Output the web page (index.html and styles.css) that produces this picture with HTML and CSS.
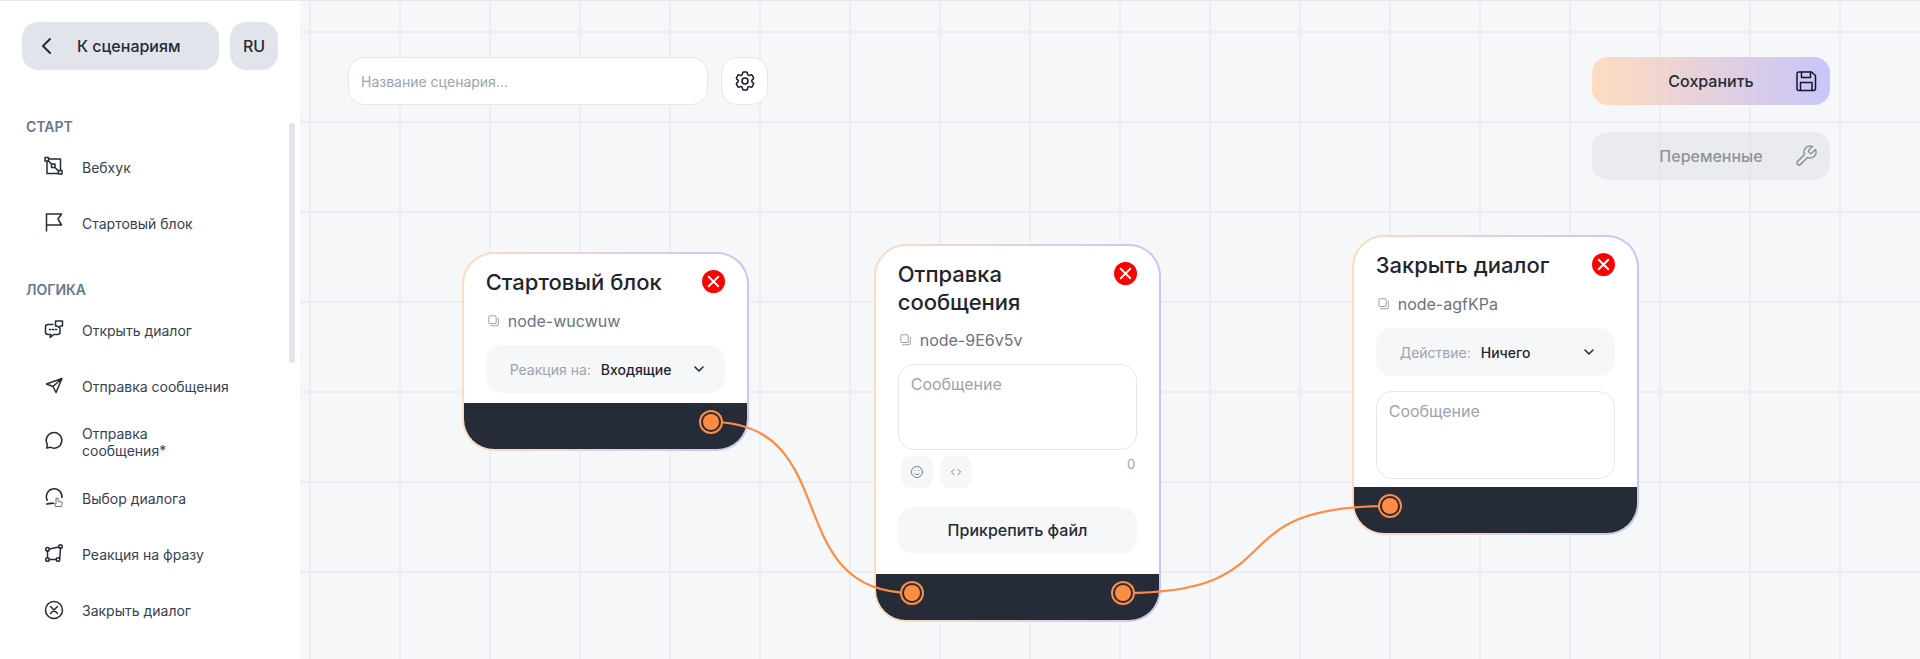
FILE: index.html
```html
<!DOCTYPE html>
<html lang="en">
<head>
  <meta charset="UTF-8" />
  <title>Сценарий</title>
  <link rel="stylesheet" href="styles.css">
</head>
<body>
  <div class="page">
    <aside class="sidebar">
      <div class="side-head">
        <button class="back-btn">
          <svg class="back-icon" viewBox="0 0 24 24"><path d="M15 5l-7 7 7 7"/></svg>
          <span>К сценариям</span>
        </button>
        <button class="lang-btn">RU</button>
      </div>

      <div class="side-title">СТАРТ</div>
      <div class="side-item">
        <svg class="side-icon" viewBox="0 0 24 24"><path d="M7 4H18.500V15M5 6.500V18.500H16M6.500 6L9.500 9M13 12.500L16 15.500"/><rect x="3" y="2.500" width="3.500" height="3.500"/><rect x="9.500" y="9" width="3.500" height="3.500"/><rect x="16.500" y="15.500" width="3.500" height="3.500"/></svg>
        <span class="side-label">Вебхук</span>
      </div>
      <div class="side-item">
        <svg class="side-icon" viewBox="0 0 24 24"><path d="M4.500 20V3H19.500L16 8L19.500 14H4.500"/></svg>
        <span class="side-label">Стартовый блок</span>
      </div>

      <div class="side-title side-title-next">ЛОГИКА</div>
      <div class="side-item">
        <svg class="side-icon" viewBox="0 0 24 24"><path d="M11 6.500H6A2.500 2.500 0 0 0 3.500 9V14A2.500 2.500 0 0 0 6 16.500H9L8 19.500L12 16.500H15.500A2.500 2.500 0 0 0 18 14V10M13.500 3H20.500V8H18.500L17 9.500L15.500 8H13.500Z"/><path class="dots" d="M7.500 11.500H8.500M10.500 11.500H11.500M13.500 11.500H14.500"/></svg>
        <span class="side-label">Открыть диалог</span>
      </div>
      <div class="side-item">
        <svg class="side-icon" viewBox="0 0 24 24"><path d="M20 4.500L4.500 10L11 12.500L14 18.500ZM11 12.500L20 4.500"/></svg>
        <span class="side-label">Отправка сообщения</span>
      </div>
      <div class="side-item">
        <svg class="side-icon" viewBox="0 0 24 24"><path d="M5.300 14.300A7.800 7.800 0 1 1 8.300 17.200L4.800 18Z"/></svg>
        <span class="side-label">Отправка сообщения*</span>
      </div>
      <div class="side-item">
        <svg class="side-icon" viewBox="0 0 24 24"><path d="M5.300 14.300A7.800 7.800 0 1 1 19.900 11.500M11.500 17.200H8.300L4.800 18Z"/><path class="hand" d="M14 12.500V18L12.500 17.500L13.500 20.500H19.500L20.500 16.500L16 15V12.500Z"/></svg>
        <span class="side-label">Выбор диалога</span>
      </div>
      <div class="side-item">
        <svg class="side-icon" viewBox="0 0 24 24"><path d="M7.300 7L16.700 4.900M5.500 9V15.700M7.300 17.500H14.200M17.800 16L18.500 6.300"/><circle cx="5.500" cy="7.300" r="1.800"/><circle cx="18.500" cy="4.500" r="1.800"/><circle cx="5.500" cy="17.500" r="1.800"/><circle cx="16" cy="17.500" r="1.800"/></svg>
        <span class="side-label">Реакция на фразу</span>
      </div>
      <div class="side-item">
        <svg class="side-icon" viewBox="0 0 24 24"><circle cx="12" cy="12" r="8.500"/><path d="M8.500 8.500L15.500 15.500M15.500 8.500L8.500 15.500"/></svg>
        <span class="side-label">Закрыть диалог</span>
      </div>
      <div class="side-scroll"></div>
    </aside>

    <main class="canvas">
      <div class="toolbar">
        <div class="toolbar-left">
          <div class="name-input">Название сценария...</div>
          <button class="gear-btn">
            <svg class="gear-icon" viewBox="0 0 24 24"><path d="M9.594 3.94c.09-.542.56-.94 1.11-.94h2.593c.55 0 1.02.398 1.11.94l.213 1.281c.063.374.313.686.645.87.074.04.147.083.22.127.325.196.72.257 1.075.124l1.217-.456a1.125 1.125 0 0 1 1.37.49l1.296 2.247a1.125 1.125 0 0 1-.26 1.431l-1.003.827c-.293.241-.438.613-.43.992a7.723 7.723 0 0 1 0 .255c-.008.378.137.75.43.991l1.004.827c.424.35.534.955.26 1.43l-1.298 2.247a1.125 1.125 0 0 1-1.369.491l-1.217-.456c-.355-.133-.75-.072-1.076.124a6.47 6.47 0 0 1-.22.128c-.331.183-.581.495-.644.869l-.213 1.281c-.09.543-.56.94-1.11.94h-2.594c-.55 0-1.019-.398-1.11-.94l-.213-1.281c-.062-.374-.312-.686-.644-.87a6.52 6.52 0 0 1-.22-.127c-.325-.196-.72-.257-1.076-.124l-1.217.456a1.125 1.125 0 0 1-1.369-.49l-1.297-2.247a1.125 1.125 0 0 1 .26-1.431l1.004-.827c.292-.24.437-.613.43-.991a6.932 6.932 0 0 1 0-.255c.007-.38-.138-.751-.43-.992l-1.004-.827a1.125 1.125 0 0 1-.26-1.43l1.297-2.247a1.125 1.125 0 0 1 1.37-.491l1.216.456c.356.133.751.072 1.076-.124.072-.044.146-.086.22-.128.332-.183.582-.495.644-.869l.214-1.28Z"/><circle cx="12" cy="12" r="3"/></svg>
          </button>
        </div>
        <div class="toolbar-right">
          <button class="action-btn save-btn">
            <span class="action-text">Сохранить</span>
            <svg class="action-icon" viewBox="0 0 24 24"><path d="M5 3H17.500L21.500 6.500V19.500A2 2 0 0 1 19.500 21.500H5A2 2 0 0 1 3 19.500V5A2 2 0 0 1 5 3Z"/><path d="M7.500 3V8.500H16.500V3M6.500 21.500V13.500H18V21.500"/></svg>
          </button>
          <button class="action-btn vars-btn">
            <span class="action-text">Переменные</span>
            <svg class="action-icon" viewBox="0 0 24 24"><path d="M14.700 6.300a1 1 0 0 0 0 1.400l1.600 1.600a1 1 0 0 0 1.400 0l3.770-3.770a6 6 0 0 1-7.940 7.940l-6.910 6.910a2.120 2.120 0 0 1-3-3l6.910-6.910a6 6 0 0 1 7.940-7.940l-3.760 3.760z"/></svg>
          </button>
        </div>
      </div>

      <div class="node node-start">
        <div class="node-body">
          <div class="node-head">
            <div class="node-title">Стартовый блок</div>
            <span class="node-close"><svg viewBox="0 0 24 24"><path d="M7 7L17 17M17 7L7 17"/></svg></span>
          </div>
          <div class="node-id">
            <svg class="copy-icon" viewBox="0 0 14 14"><rect x="1" y="1" width="8.500" height="9" rx="1.500"/><path d="M12 3.500V10.500A2 2 0 0 1 10 12.500H3"/></svg>
            <span>node-wucwuw</span>
          </div>
          <div class="node-select">
            <span class="select-label">Реакция на:</span>
            <span class="select-value">Входящие</span>
            <svg class="select-arrow" viewBox="0 0 24 24"><path d="M6 9l6 6 6-6"/></svg>
          </div>
        </div>
        <div class="node-foot foot-end"><span class="handle"></span></div>
      </div>

      <div class="node node-send">
        <div class="node-body">
          <div class="node-head">
            <div class="node-title">Отправка<br>сообщения</div>
            <span class="node-close"><svg viewBox="0 0 24 24"><path d="M7 7L17 17M17 7L7 17"/></svg></span>
          </div>
          <div class="node-id">
            <svg class="copy-icon" viewBox="0 0 14 14"><rect x="1" y="1" width="8.500" height="9" rx="1.500"/><path d="M12 3.500V10.500A2 2 0 0 1 10 12.500H3"/></svg>
            <span>node-9E6v5v</span>
          </div>
          <div class="node-area">Сообщение</div>
          <div class="area-tools">
            <span class="tool-btn">
              <svg viewBox="0 0 24 24"><circle cx="12" cy="12" r="9.500"/><path d="M8 14.500s1.500 2 4 2 4-2 4-2M9 9.500h.01M15 9.500h.01"/></svg>
            </span>
            <span class="tool-btn">
              <svg viewBox="0 0 24 24"><path d="M8.500 7.500L4 12l4.500 4.500M15.500 7.500L20 12l-4.500 4.500"/></svg>
            </span>
            <span class="area-count">0</span>
          </div>
          <button class="attach-btn">Прикрепить файл</button>
        </div>
        <div class="node-foot foot-between"><span class="handle"></span><span class="handle"></span></div>
      </div>

      <div class="node node-close-dialog">
        <div class="node-body">
          <div class="node-head">
            <div class="node-title">Закрыть диалог</div>
            <span class="node-close"><svg viewBox="0 0 24 24"><path d="M7 7L17 17M17 7L7 17"/></svg></span>
          </div>
          <div class="node-id">
            <svg class="copy-icon" viewBox="0 0 14 14"><rect x="1" y="1" width="8.500" height="9" rx="1.500"/><path d="M12 3.500V10.500A2 2 0 0 1 10 12.500H3"/></svg>
            <span>node-agfKPa</span>
          </div>
          <div class="node-select">
            <span class="select-label">Действие:</span>
            <span class="select-value">Ничего</span>
            <svg class="select-arrow" viewBox="0 0 24 24"><path d="M6 9l6 6 6-6"/></svg>
          </div>
          <div class="node-area node-area-low">Сообщение</div>
        </div>
        <div class="node-foot"><span class="handle"></span></div>
      </div>

      <svg class="edges" viewBox="0 0 1620 658">
        <path d="M411 421C545 421 478 592 612 592"/>
        <path d="M823 592C1000 592 912 505 1089 505"/>
      </svg>
    </main>
  </div>
</body>
</html>
```

FILE: styles.css
```css
* {
  margin: 0;
  padding: 0;
  box-sizing: border-box;
}

html, body {
  height: 100%;
  overflow: hidden;
}

body {
  font-family: 'Inter', sans-serif;
  color: #252b37;
  background: white;
}

button {
  font-family: inherit;
  border: none;
  cursor: pointer;
  color: inherit;
}

svg {
  display: block;
  fill: none;
  stroke: currentColor;
  stroke-width: 1.5;
  stroke-linecap: round;
  stroke-linejoin: round;
}

.page {
  display: flex;
  height: 100vh;
  border-top: 1px solid #e5e7eb;
}

/* Sidebar */
.sidebar {
  position: relative;
  width: 300px;
  flex-shrink: 0;
  padding: 21px 22px 0;
  background: white;
  overflow: hidden;
}

.side-head {
  display: flex;
  gap: 11px;
  margin-bottom: 47px;
}

.back-btn {
  width: 197px;
  height: 48px;
  display: flex;
  align-items: center;
  gap: 18px;
  padding-left: 13px;
  font-size: 16px;
  font-weight: 500;
  background: #e1e4eb;
  border-radius: 16px;
}

.back-icon {
  width: 24px;
  height: 24px;
  stroke-width: 2;
}

.lang-btn {
  width: 48px;
  height: 48px;
  font-size: 16px;
  font-weight: 500;
  background: #e1e4eb;
  border-radius: 16px;
}

.side-title {
  padding-left: 4px;
  margin-bottom: 2px;
  font-size: 14px;
  line-height: 20px;
  font-weight: 600;
  color: #667793;
}

.side-title-next {
  margin-top: 29px;
}

.side-item {
  display: flex;
  align-items: center;
  gap: 16px;
  height: 56px;
  padding-left: 20px;
}

.side-icon {
  width: 24px;
  height: 24px;
  flex-shrink: 0;
}

.side-icon .dots {
  stroke-width: 1.7;
}

.side-icon .hand {
  stroke: #6b7280;
  stroke-width: 1;
  fill: white;
}

.side-label {
  width: 150px;
  font-size: 14px;
  line-height: 17px;
  color: #374151;
}

.side-scroll {
  position: absolute;
  top: 122px;
  right: 5px;
  width: 6px;
  height: 240px;
  background: #e1e4eb;
  border-radius: 3px;
}

/* Canvas */
.canvas {
  position: relative;
  flex: 1;
  overflow: hidden;
  background-color: #f6f7f9;
  background-image:
    linear-gradient(#eceef4 2px, transparent 2px),
    linear-gradient(90deg, #eceef4 2px, transparent 2px);
  background-size: 90px 90px;
  background-position: 9px 30px;
}

.toolbar {
  position: absolute;
  top: 56px;
  left: 48px;
  right: 90px;
  display: flex;
  justify-content: space-between;
  align-items: flex-start;
}

.toolbar-left {
  display: flex;
  gap: 13px;
}

.name-input {
  width: 360px;
  height: 48px;
  display: flex;
  align-items: center;
  padding-left: 12px;
  font-size: 14px;
  color: #9ca3af;
  background: white;
  border: 1px solid #e5e7eb;
  border-radius: 16px;
}

.gear-btn {
  width: 47px;
  height: 48px;
  display: flex;
  align-items: center;
  justify-content: center;
  background: white;
  border: 1px solid #e5e7eb;
  border-radius: 16px;
}

.gear-icon {
  width: 24px;
  height: 24px;
  color: #111827;
}

.toolbar-right {
  display: flex;
  flex-direction: column;
  gap: 27px;
  width: 238px;
}

.action-btn {
  height: 48px;
  display: grid;
  grid-template-columns: 1fr auto 1fr;
  align-items: center;
  padding-right: 12px;
  padding-left: 12px;
  font-size: 16px;
  font-weight: 500;
  border-radius: 16px;
}

.action-text {
  grid-column: 2;
}

.action-icon {
  grid-column: 3;
  justify-self: end;
  width: 24px;
  height: 24px;
}

.save-btn {
  background: linear-gradient(90deg, #fedcbf, #c9c5fb);
}

.save-btn .action-icon {
  color: #111827;
}

.vars-btn {
  color: #8f939b;
  background: rgba(225, 226, 231, 0.6);
}

/* Nodes */
.node {
  position: absolute;
  display: flex;
  flex-direction: column;
  width: 287.6px;
  border: 2px solid transparent;
  border-radius: 32px;
  background:
    linear-gradient(white, white) padding-box,
    linear-gradient(90deg, #fedcbf, #c9c5fb) border-box;
  overflow: hidden;
}

.node-start {
  left: 161.7px;
  top: 251px;
}

.node-send {
  left: 573.7px;
  top: 243px;
}

.node-close-dialog {
  left: 1051.7px;
  top: 234px;
}

.node-body {
  padding: 14px 22px 0;
}

.node-head {
  display: flex;
  justify-content: space-between;
  align-items: flex-start;
}

.node-title {
  font-size: 22px;
  line-height: 28px;
  font-weight: 500;
  color: #1f2530;
}

.node-close {
  width: 23px;
  height: 23px;
  margin-top: 2px;
  color: white;
  background: #ff0000;
  border-radius: 50%;
}

.node-close svg {
  width: 23px;
  height: 23px;
  stroke-width: 2;
}

.node-id {
  display: flex;
  align-items: center;
  gap: 8px;
  height: 20px;
  margin-top: 15px;
  padding-left: 2px;
  font-size: 16px;
  color: #6b7280;
}

.node-send .node-id {
  margin-top: 14px;
}

.copy-icon {
  width: 12px;
  height: 12px;
  color: #9ca3af;
  stroke-width: 1.2;
}

.node-select {
  display: flex;
  align-items: center;
  gap: 10px;
  height: 48px;
  margin-top: 14px;
  padding-left: 24px;
  font-size: 14px;
  background: #f6f7f9;
  border-radius: 16px;
}

.select-label {
  color: #9ca3af;
}

.select-value {
  flex: 1;
  font-weight: 500;
  color: #1f2530;
}

.select-arrow {
  width: 16px;
  height: 16px;
  margin-right: 18px;
  stroke-width: 2.4;
}

.node-area {
  height: 86px;
  margin-top: 14px;
  padding: 9px 12px;
  font-size: 16px;
  line-height: 20px;
  color: #9ca3af;
  background: white;
  border: 1px solid #e5e7eb;
  border-radius: 16px;
}

.node-area-low {
  height: 88px;
  margin-top: 15px;
  margin-bottom: 8px;
}

.area-tools {
  display: flex;
  gap: 7px;
  margin-top: 6px;
  padding-left: 3px;
}

.tool-btn {
  width: 32px;
  height: 32px;
  display: flex;
  align-items: center;
  justify-content: center;
  color: #6b7280;
  background: #f6f7f9;
  border-radius: 10px;
}

.tool-btn svg {
  width: 14px;
  height: 14px;
}

.area-count {
  margin-left: auto;
  margin-right: 2px;
  font-size: 13px;
  line-height: 16px;
  color: #9ca3af;
}

.attach-btn {
  display: block;
  width: 100%;
  height: 47px;
  margin-top: 19px;
  margin-bottom: 20px;
  padding-bottom: 2px;
  font-size: 16px;
  font-weight: 500;
  background: #f6f7f9;
  border-radius: 16px;
}

.node-start .node-select {
  margin-bottom: 10px;
}

.node-foot {
  display: flex;
  height: 46px;
  padding: 11px 28px 0;
  background: #252b37;
}

.foot-end {
  justify-content: flex-end;
}

.foot-between {
  justify-content: space-between;
}

.handle {
  position: relative;
  z-index: 2;
  width: 16px;
  height: 16px;
  background: #ff8c42;
  border-radius: 50%;
  box-shadow: 0 0 0 2px #252b37, 0 0 0 4px #ff8c42;
}

.edges {
  position: absolute;
  left: 0;
  top: 0;
  width: 1620px;
  height: 658px;
  z-index: 1;
  color: #ff8c42;
  stroke-width: 2.2;
  pointer-events: none;
}
```
